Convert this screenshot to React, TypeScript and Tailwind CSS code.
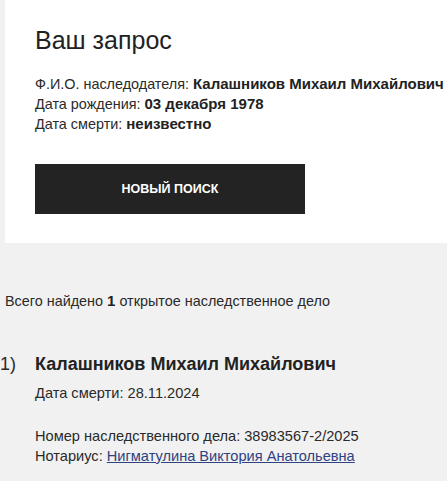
export default function App() {
  return (
    <div className="min-h-[481px] bg-[#f1f1f1] font-['Liberation_Sans',Arial,sans-serif] text-[#222] overflow-hidden">
      {/* Request card */}
      <div className="ml-[5px] bg-white pl-[30px] pt-[26px] pb-[29px] w-[600px]">
        <h1 className="text-[25px] leading-[28px] font-medium text-[#222]">Ваш запрос</h1>
        <div className="mt-[20px] leading-[20px] whitespace-nowrap">
          <p>
            <span className="text-[14.4px] text-[#2a2a2a]">Ф.И.О. наследодателя: </span>
            <b className="text-[15px]">Калашников Михаил Михайлович</b>
          </p>
          <p>
            <span className="text-[14.4px] text-[#2a2a2a]">Дата рождения: </span>
            <b className="text-[15px]">03 декабря 1978</b>
          </p>
          <p>
            <span className="text-[14.4px] text-[#2a2a2a]">Дата смерти: </span>
            <b className="text-[15px]">неизвестно</b>
          </p>
        </div>
        <button className="mt-[30px] flex h-[50px] w-[270px] items-center justify-center bg-[#232323] text-[12.5px] font-bold uppercase text-white">
          Новый поиск
        </button>
      </div>

      {/* Results */}
      <p className="mt-[48px] pl-[5px] text-[14.4px] leading-[20px] text-[#2a2a2a]">
        Всего найдено <b className="text-[15px] text-[#222]">1</b> открытое наследственное дело
      </p>

      <div className="mt-[41px] flex">
        <span className="w-[35px] text-[18px] leading-[24px] text-[#2a2a2a]">1)</span>
        <div className="whitespace-nowrap">
          <h2 className="text-[18px] leading-[24px] font-bold text-[#222]">Калашников Михаил Михайлович</h2>
          <p className="mt-[7px] text-[14.6px] leading-[20px] text-[#2a2a2a]">Дата смерти: 28.11.2024</p>
          <div className="mt-[23px] text-[14.6px] leading-[20px] text-[#2a2a2a]">
            <p>Номер наследственного дела: 38983567-2/2025</p>
            <p>
              Нотариус:{" "}
              <a href="#" className="text-[#2e4380] underline">
                Нигматулина Виктория Анатольевна
              </a>
            </p>
          </div>
        </div>
      </div>
    </div>
  );
}
